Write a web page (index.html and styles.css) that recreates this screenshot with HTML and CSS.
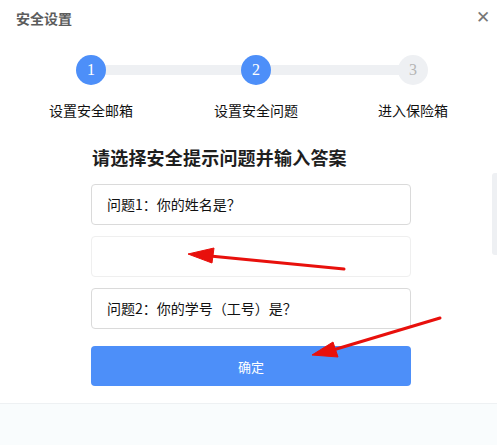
FILE: index.html
```html
<!DOCTYPE html>
<html lang="zh-CN">
<head>
    <meta charset="UTF-8">
    <title>安全设置</title>
    <link rel="stylesheet" href="styles.css">
</head>
<body>
    <div class="dialog">
        <div class="dialog-head">
            <span class="dialog-title">安全设置</span>
            <span class="close">&#x2715;</span>
        </div>

        <div class="steps">
            <div class="step done">
                <div class="dot">1</div>
                <div class="step-label">设置安全邮箱</div>
            </div>
            <div class="step done">
                <div class="dot">2</div>
                <div class="step-label">设置安全问题</div>
            </div>
            <div class="step">
                <div class="dot">3</div>
                <div class="step-label">进入保险箱</div>
            </div>
        </div>

        <div class="form">
            <h2>请选择安全提示问题并输入答案</h2>
            <div class="field">问题1：你的姓名是？</div>
            <div class="field answer"></div>
            <div class="field">问题2：你的学号（工号）是？</div>
            <button class="btn">确定</button>
        </div>

        <div class="foot"></div>
        <div class="scrollbar"></div>

        <!-- annotation arrows drawn over the screenshot -->
        <svg class="marks" width="497" height="445" viewBox="0 0 497 445">
            <g fill="#e8100c" stroke="#e8100c" stroke-linejoin="round">
                <line x1="344" y1="269" x2="210" y2="256" stroke-width="3" stroke-linecap="round"/>
                <polygon points="188,254 214,248 212,263" stroke-width="1"/>
                <line x1="440" y1="318" x2="333" y2="350" stroke-width="3" stroke-linecap="round"/>
                <polygon points="312,355 333,342 338,357" stroke-width="1"/>
            </g>
        </svg>
    </div>
</body>
</html>
```

FILE: styles.css
```css
body {
    margin: 0;
    font-family: "Noto Sans CJK SC", "Noto Sans", sans-serif;
    background-color: #fff;
    color: #222;
}
.dialog {
    position: relative;
    width: 497px;
    height: 445px;
    overflow: hidden;
}
.dialog-head {
    display: flex;
    justify-content: space-between;
    padding: 9px 7px 0 16px;
    height: 19px;
}
.dialog-title {
    font-size: 14px;
    line-height: 19px;
    font-weight: bold;
    color: #5c5c5c;
}
.close {
    font-size: 17px;
    line-height: 14px;
    font-weight: 300;
    color: #777;
}
.steps {
    position: relative;
    display: grid;
    grid-template-columns: 162px 168px 146px;
    margin: 27px 0 0 10px;
}
.steps::before {
    content: "";
    position: absolute;
    top: 10px;
    left: 81px;
    width: 322px;
    height: 10px;
    background-color: #eef0f3;
}
.step {
    display: flex;
    flex-direction: column;
    align-items: center;
}
.dot {
    position: relative;
    z-index: 1;
    width: 30px;
    height: 30px;
    border-radius: 50%;
    background-color: #eef0f3;
    color: #b5b5b5;
    font-family: "Liberation Serif", serif;
    font-size: 16px;
    line-height: 30px;
    text-align: center;
}
.step.done .dot {
    background-color: #4d8ff9;
    color: #fff;
}
.step-label {
    margin-top: 15px;
    font-size: 14px;
    line-height: 20px;
    color: #111;
}
.form {
    width: 320px;
    margin: 0 auto 0 91px;
}
.form h2 {
    margin: 25px 0 15px 1px;
    font-size: 18px;
    line-height: 24px;
    font-weight: bold;
    color: #1e1e1e;
    letter-spacing: 0.2px;
}
.field {
    box-sizing: border-box;
    height: 41px;
    margin-bottom: 11px;
    padding: 0 15px;
    border: 1px solid #dadada;
    border-radius: 4px;
    font-size: 14px;
    line-height: 39px;
    color: #111;
}
.field.answer {
    border-color: #efefef;
}
.btn {
    display: block;
    width: 320px;
    height: 40px;
    margin-top: 17px;
    border: 0;
    border-radius: 4px;
    background-color: #4d8ff9;
    color: #fff;
    font-family: inherit;
    font-size: 13px;
}
.foot {
    margin-top: 17px;
    height: 60px;
    border-top: 1px solid #eef1f3;
    background-color: #f9fcfd;
}
.scrollbar {
    position: absolute;
    top: 173px;
    right: 0;
    width: 5px;
    height: 82px;
    border-radius: 3px 0 0 3px;
    background-color: #eef0f3;
}
.marks {
    position: absolute;
    top: 0;
    left: 0;
}
```
